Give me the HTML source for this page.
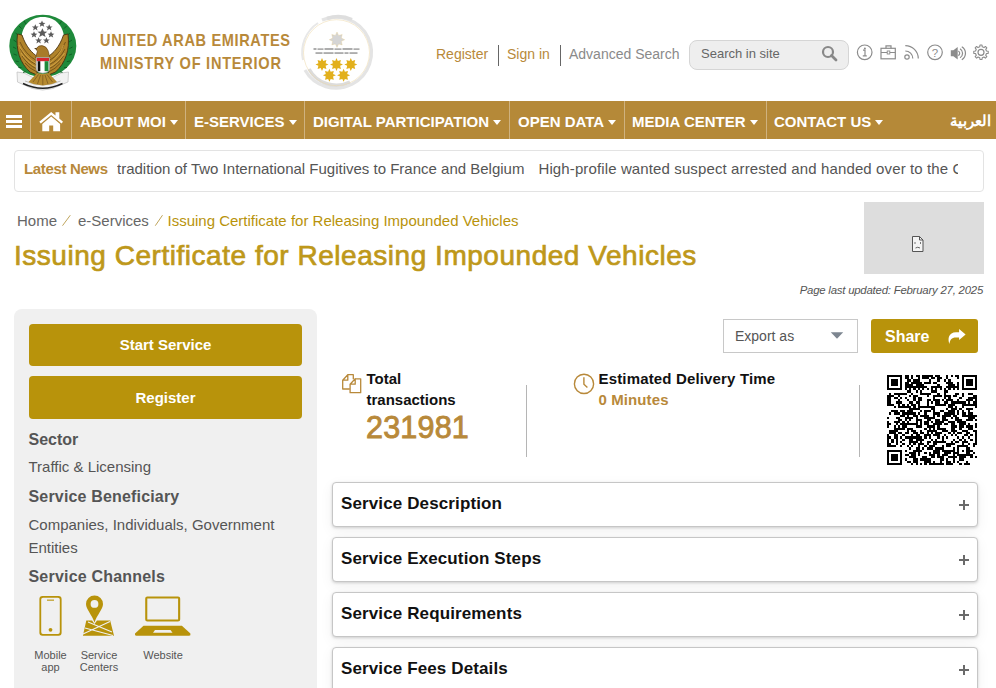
<!DOCTYPE html>
<html><head><meta charset="utf-8">
<style>
*{margin:0;padding:0;box-sizing:border-box}
html,body{width:996px;height:688px;overflow:hidden;background:#fff;font-family:"Liberation Sans",sans-serif}
.a{position:absolute;white-space:nowrap}
#nav{position:absolute;left:0;top:101px;width:996px;height:38px;background:#b58938}
#nav .sep{position:absolute;top:0;width:1px;height:38px;background:#cfb27f}
#nav .it{position:absolute;top:11px;height:20px;line-height:20px;color:#fff;font-weight:bold;font-size:15px}
.caret{display:inline-block;width:0;height:0;border-left:4px solid transparent;border-right:4px solid transparent;border-top:5px solid #fff;vertical-align:middle;margin-left:4px;position:relative;top:-1px}
.btn{position:absolute;left:29px;width:273px;height:42px;background:#b8930b;border-radius:4px;color:#fff;font-weight:bold;font-size:15px;text-align:center;line-height:42px}
.acc{position:absolute;left:332px;width:646px;height:45px;border:1px solid #c6c6c6;border-radius:4px;background:#fff;box-shadow:0 1px 3px rgba(0,0,0,0.16),0 4px 14px rgba(0,0,0,0.06)}
.acc .t{position:absolute;left:8px;top:0;line-height:42px;font-weight:bold;font-size:17px;letter-spacing:0.12px;color:#111}
.acc .p{position:absolute;left:626px;top:17px;width:10px;height:10px}
.acc .p:before{content:"";position:absolute;left:4px;top:0;width:2px;height:10px;background:#6a6a6a}
.acc .p:after{content:"";position:absolute;left:0;top:4px;width:10px;height:2px;background:#6a6a6a}
.lbl{position:absolute;font-size:11px;line-height:12px;color:#555;text-align:center;white-space:nowrap}
</style></head><body>

<!-- MOI emblem -->
<svg class="a" style="left:0;top:0" width="90" height="100" viewBox="0 0 90 100">
  <!-- ribbon -->
  <path d="M17 72 L24 73 Q42.8 86 61.5 73 L68.5 72 L68 82 L63 84 Q42.8 96 22 84 L17.5 82Z" fill="#f2f2f2" stroke="#bdbdbd" stroke-width="0.7"/>
  <path d="M23 83.5 Q42.8 93 62.5 83.5" fill="none" stroke="#222" stroke-width="1.4"/>
  <path d="M25 81 Q42.8 89 60.5 81" fill="none" stroke="#999" stroke-width="0.6"/>
  <ellipse cx="42.8" cy="46" rx="33.5" ry="31.2" fill="#1f8a3b"/>
  <g fill="none" stroke="#0f5c22" stroke-width="0.9">
    <path d="M13.5 40 l3 2 M13 47 l3.2 1.6 M13.6 54 l3.2 1.2 M15.5 61 l3.2 0.6 M18.5 67.5 l3 0 M23 72.5 l2.6 -0.8 M15.5 33 l3 2.3 M19 26 l2.6 2.6 M24 21 l2 3"/>
    <path d="M72 40 l-3 2 M72.6 47 l-3.2 1.6 M72 54 l-3.2 1.2 M70 61 l-3.2 0.6 M67 67.5 l-3 0 M62.5 72.5 l-2.6 -0.8 M70 33 l-3 2.3 M66.6 26 l-2.6 2.6 M61.6 21 l-2 3"/>
  </g>
  <path d="M42.8 17 C56 17 64.5 27 64 40 C63.5 52 56 62 42.8 62 C29.6 62 22 52 21.5 40 C21 27 29.6 17 42.8 17Z" fill="#fff"/>
  <g fill="#5a5a5a">
    <path d="M42 20.5l1 2.3 2.4.1-1.9 1.5.7 2.3-2.2-1.3-2.2 1.3.7-2.3-1.9-1.5 2.4-.1z"/>
    <path d="M35.3 24.2l1 2.3 2.4.1-1.9 1.5.7 2.3-2.2-1.3-2.2 1.3.7-2.3-1.9-1.5 2.4-.1z"/>
    <path d="M49.2 24.2l1 2.3 2.4.1-1.9 1.5.7 2.3-2.2-1.3-2.2 1.3.7-2.3-1.9-1.5 2.4-.1z"/>
    <path d="M34 31.3l1 2.3 2.4.1-1.9 1.5.7 2.3-2.2-1.3-2.2 1.3.7-2.3-1.9-1.5 2.4-.1z"/>
    <path d="M51 31.3l1 2.3 2.4.1-1.9 1.5.7 2.3-2.2-1.3-2.2 1.3.7-2.3-1.9-1.5 2.4-.1z"/>
    <path d="M38.6 37.2l1 2.3 2.4.1-1.9 1.5.7 2.3-2.2-1.3-2.2 1.3.7-2.3-1.9-1.5 2.4-.1z"/>
    <path d="M46.4 37.2l1 2.3 2.4.1-1.9 1.5.7 2.3-2.2-1.3-2.2 1.3.7-2.3-1.9-1.5 2.4-.1z"/>
    <path d="M42.4 28.3l1.5 3.2 3.4.2-2.7 2.1 1 3.3-3.2-1.9-3.2 1.9 1-3.3-2.7-2.1 3.4-.2z"/>
  </g>
  <!-- wings -->
  <path d="M17.5 34 C15.5 50 20 63 30 72 L37 75 L38 57 C32 53 26 47 22 35Z" fill="#b0832a" stroke="#4a3210" stroke-width="0.9"/>
  <path d="M68 34 C70 50 65.5 63 55.5 72 L48.5 75 L47.5 57 C53.5 53 59.5 47 63.5 35Z" fill="#b0832a" stroke="#4a3210" stroke-width="0.9"/>
  <g stroke="#5e4112" stroke-width="0.7" fill="none">
    <path d="M20 42 Q25 54 37 61 M20.5 49 Q26 60 37 65 M22 56 Q28 65 37 69 M25 63 Q30 69 37 72"/>
    <path d="M65.5 42 Q60.5 54 48.5 61 M65 49 Q59.5 60 48.5 65 M63.5 56 Q57.5 65 48.5 69 M60.5 63 Q55.5 69 48.5 72"/>
  </g>
  <g stroke="#e0b050" stroke-width="0.7" fill="none">
    <path d="M19 45 Q25 57 36 63.5 M21 53 Q27 62.5 36 67 M63.5 45 Q60 55 49.5 63.5 M64.5 53 Q58.5 62.5 49.5 67"/>
  </g>
  <!-- tail -->
  <path d="M28.5 82 L37 73 L42.8 74 L48.5 73 L57 82 L52 84 L42.8 85.5 L33.5 84Z" fill="#b58a30"/>
  <g stroke="#6b4a17" stroke-width="0.6"><path d="M33 82 L38.5 74.5 M37.5 84 L40.5 75 M42.8 85 V75 M48 84 L45 75 M52.5 82 L47 74.5"/></g>
  <!-- body/head -->
  <path d="M36.5 48.5 Q38 45.3 42 45.6 Q46.5 46.3 48 50.5 L50 58 L35.5 58 L37.5 51 Q35.5 50.3 36.5 48.5Z" fill="#a87b2a" stroke="#5a3d10" stroke-width="0.6"/>
  <path d="M36.5 47.8 L34 48.6 L36.8 49.8Z" fill="#4a3210"/>
  <!-- shield -->
  <path d="M36.2 57.6 H49.5 V69 Q49.5 72.5 42.8 73.2 Q36.2 72.5 36.2 69Z" fill="#fff" stroke="#9a9a9a" stroke-width="0.7"/>
  <rect x="36.7" y="58" width="12.3" height="3.2" fill="#d7262f"/>
  <rect x="37.7" y="61.2" width="2.6" height="10" fill="#111"/>
  <rect x="44.6" y="61.2" width="3.9" height="10" fill="#1f8a3b"/>
</svg>

<svg class="a" style="left:95px;top:25px" width="205" height="50" viewBox="95 25 205 50">
  <g transform="translate(100 0) scale(0.9 1)"><text x="0" y="46.2" font-family="Liberation Sans" font-weight="bold" font-size="16.2" fill="#b8893a" textLength="211.1" lengthAdjust="spacing">UNITED ARAB EMIRATES</text>
  <text x="0" y="69.4" font-family="Liberation Sans" font-weight="bold" font-size="16.2" fill="#b8893a" textLength="201.1" lengthAdjust="spacing">MINISTRY OF INTERIOR</text></g>
</svg>

<!-- star rating logo -->
<svg class="a" style="left:295px;top:10px" width="85" height="85" viewBox="295 10 85 85">
  <path d="M322 20 A35.5 35.5 0 1 1 305 70" fill="none" stroke="#e4e4e4" stroke-width="3.2"/>
  <path d="M309 69 A31 31 0 0 0 350 82" fill="none" stroke="#dcdcdc" stroke-width="3.5"/>
  <path d="M303 60 A35 35 0 0 1 318 23" fill="none" stroke="#e8e8e8" stroke-width="2"/>
  <path d="M327 18.5 A35 35 0 0 1 352 19.5" fill="none" stroke="#dedede" stroke-width="3.5"/>
  <circle cx="336.5" cy="52.7" r="33" fill="none" stroke="#edd7a4" stroke-width="0.5"/>
  <path d="M337 32 l1.6 3.4 3.6-.9-.9 3.6 3.4 1.6-3.4 1.6.9 3.6-3.6-.9-1.6 3.4-1.6-3.4-3.6.9.9-3.6-3.4-1.6 3.4-1.6-.9-3.6 3.6.9z" fill="#d5d5d5" stroke="#e5c47a" stroke-width="0.3"/>
  <g fill="#8a8a8a"><rect x="313.5" y="48.3" width="3" height="1.4"/><rect x="317.5" y="48.5" width="6" height="1.2"/><rect x="324.5" y="48.3" width="9" height="1.4"/><rect x="334.5" y="48.5" width="7" height="1.2"/><rect x="342.5" y="48.3" width="10" height="1.4"/><rect x="353.5" y="48.5" width="6" height="1.2"/></g>
  <g fill="#9a9a9a"><rect x="315.5" y="52.3" width="7" height="1.5"/><rect x="323.5" y="52.3" width="10" height="1.5"/><rect x="334.5" y="52.3" width="9" height="1.5"/><rect x="344.5" y="52.3" width="4" height="1.5"/><rect x="349.5" y="52.3" width="8" height="1.5"/></g>
  <g fill="#e2b01c">
    <path id="st" d="M322 58 l1.3 2.9 3.1-.8-.8 3.1 2.9 1.3-2.9 1.3.8 3.1-3.1-.8-1.3 2.9-1.3-2.9-3.1.8.8-3.1-2.9-1.3 2.9-1.3-.8-3.1 3.1.8z"/>
    <use href="#st" x="14.5"/><use href="#st" x="28.8"/>
    <use href="#st" x="7.4" y="10.8"/><use href="#st" x="21.6" y="10.8"/>
  </g>
</svg>

<!-- top links -->
<div class="a" style="left:436px;top:45px;font-size:14px;line-height:18px;color:#b8893a">Register</div>
<div class="a" style="left:498px;top:45px;width:1px;height:21px;background:#666"></div>
<div class="a" style="left:507px;top:45px;font-size:14px;line-height:18px;color:#b8893a">Sign in</div>
<div class="a" style="left:560px;top:45px;width:1px;height:21px;background:#666"></div>
<div class="a" style="left:569px;top:45px;font-size:14px;line-height:18px;color:#8a8a8a">Advanced Search</div>
<div class="a" style="left:689px;top:40px;width:160px;height:30px;background:#eeeeee;border:1px solid #d5d5d5;border-radius:8px"></div>
<div class="a" style="left:701px;top:45px;font-size:13px;line-height:18px;color:#666">Search in site</div>
<svg class="a" style="left:820px;top:44px" width="20" height="20" viewBox="0 0 20 20"><circle cx="8" cy="8" r="5" fill="none" stroke="#888" stroke-width="2.2"/><path d="M11.5 11.5 L16 16" stroke="#888" stroke-width="2.8" stroke-linecap="round"/></svg>
<!-- header icons -->
<svg class="a" style="left:850px;top:38px" width="146" height="30" viewBox="850 38 146 30">
  <g fill="none" stroke="#8c8c8c" stroke-width="1.2">
    <circle cx="864.7" cy="52.3" r="7.3"/>
    <path d="M863 50.2h2v5.5 M862.8 55.8h4" />
    <rect x="881" y="48.3" width="14.3" height="10.5"/>
    <path d="M886 48.3v-2.5h5v2.5 M881 52.5h14.3"/>
    <path d="M905.3 51 a7.5 7.5 0 0 1 7.5 7.5 M905.3 45.6 a13 13 0 0 1 13 13"/>
    <circle cx="935" cy="52.3" r="7.3"/>
    <path d="M958.3 51 a2.6 2.6 0 0 1 0 4.6 M960 48.8 a5.2 5.2 0 0 1 0 9 M961.8 46.8 a7.6 7.6 0 0 1 0 13"/>
    <circle cx="981" cy="52.3" r="3"/>
  </g>
  <rect x="887.2" y="51" width="2.6" height="3" fill="#fff" stroke="#8c8c8c" stroke-width="0.9"/>
  <circle cx="864.9" cy="48.6" r="1" fill="#8c8c8c"/>
  <circle cx="907" cy="57" r="2.2" fill="none" stroke="#8c8c8c" stroke-width="1.2"/>
  <text x="935" y="56.8" font-family="Liberation Sans" font-size="11.5" fill="#8c8c8c" text-anchor="middle">?</text>
  <path d="M950.8 50.3h2.6l4.3-3.2v12.4l-4.3-3.2h-2.6z" fill="#8c8c8c"/>
  <path d="M979.77 46.84 L979.97 45.07 L982.03 45.07 L982.23 46.84 L984.00 47.57 L985.38 46.46 L986.84 47.92 L985.73 49.30 L986.46 51.07 L988.23 51.27 L988.23 53.33 L986.46 53.53 L985.73 55.30 L986.84 56.68 L985.38 58.14 L984.00 57.03 L982.23 57.76 L982.03 59.53 L979.97 59.53 L979.77 57.76 L978.00 57.03 L976.62 58.14 L975.16 56.68 L976.27 55.30 L975.54 53.53 L973.77 53.33 L973.77 51.27 L975.54 51.07 L976.27 49.30 L975.16 47.92 L976.62 46.46 L978.00 47.57Z" fill="none" stroke="#8c8c8c" stroke-width="1.1" stroke-linejoin="round"/>
</svg>

<!-- nav -->
<div id="nav">
  <div class="sep" style="left:30px"></div>
  <div class="sep" style="left:71px"></div>
  <div class="sep" style="left:185px"></div>
  <div class="sep" style="left:304px"></div>
  <div class="sep" style="left:509px"></div>
  <div class="sep" style="left:624px"></div>
  <div class="sep" style="left:766px"></div>
  <svg class="a" style="left:0;top:0" width="80" height="38" viewBox="0 101 80 38">
    <rect x="6" y="115" width="16" height="3" fill="#fff"/>
    <rect x="6" y="120" width="16" height="3" fill="#fff"/>
    <rect x="6" y="125" width="16" height="3" fill="#fff"/>
    <path d="M39.3 121.8 L51.2 112 L55.5 115.5 V112.3 H59.3 V118.6 L63 121.8 L61.5 123.6 L51.2 115.1 L40.8 123.6Z" fill="#fff"/>
    <path d="M42.3 131.3 V124 L51.2 116.6 L60.1 124 V131.3 H53.2 V125.6 H49.2 V131.3Z" fill="#fff"/>
  </svg>
  <div class="it" style="left:80px">ABOUT MOI<span class="caret"></span></div>
  <div class="it" style="left:194px">E-SERVICES<span class="caret"></span></div>
  <div class="it" style="left:313px">DIGITAL PARTICIPATION<span class="caret"></span></div>
  <div class="it" style="left:518px">OPEN DATA<span class="caret"></span></div>
  <div class="it" style="left:632px">MEDIA CENTER<span class="caret"></span></div>
  <div class="it" style="left:774px">CONTACT US<span class="caret"></span></div>
  <div class="it" style="left:950px;top:9.5px;font-size:15px;font-weight:bold" dir="rtl">العربية</div>
</div>

<!-- news -->
<div class="a" style="left:14px;top:150px;width:970px;height:42px;border:1px solid #e3e3e3;border-radius:4px;background:#fff"></div>
<div class="a" style="left:24px;top:159px;font-size:15px;line-height:20px;font-weight:bold;letter-spacing:-0.35px;color:#b8893a">Latest News</div>
<div class="a" style="left:117px;top:159px;width:841px;overflow:hidden;font-size:15px;line-height:20px;color:#555"><span style="margin-left:0px">tradition of Two International Fugitives to France and Belgium</span><span style="margin-left:14px;letter-spacing:0.12px">High-profile wanted suspect arrested and handed over to the Central</span></div>

<!-- breadcrumb -->
<div class="a" style="left:17px;top:212px;font-size:15px;line-height:18px;color:#666">Home</div>
<svg class="a" style="left:60px;top:213px" width="12" height="15" viewBox="60 213 12 15"><path d="M62.5 225.7 L70.3 215.2" stroke="#bfa55c" stroke-width="1"/></svg>
<div class="a" style="left:78px;top:212px;font-size:15px;line-height:18px;color:#666">e-Services</div>
<svg class="a" style="left:153px;top:213px" width="12" height="15" viewBox="153 213 12 15"><path d="M155.3 225.7 L162.5 215.2" stroke="#bfa55c" stroke-width="1"/></svg>
<div class="a" style="left:167.5px;top:212px;font-size:15px;line-height:18px;color:#b8930b">Issuing Certificate for Releasing Impounded Vehicles</div>
<div class="a" style="left:14px;top:240px;font-size:28px;line-height:32px;color:#be981a;letter-spacing:0.53px;-webkit-text-stroke:0.7px #be981a">Issuing Certificate for Releasing Impounded Vehicles</div>
<div class="a" style="left:864px;top:202px;width:120px;height:72px;background:#dddddd"></div>
<svg class="a" style="left:910px;top:235px" width="16" height="18" viewBox="0 0 16 18"><path d="M2.5 1.5 H9.5 L13 5 V16.5 H2.5Z" fill="#f4f4f4" stroke="#555" stroke-width="1"/><path d="M9.5 1.5 V5 H13" fill="none" stroke="#555" stroke-width="1"/><path d="M5.5 13 Q7.7 11.5 10 13" fill="none" stroke="#555" stroke-width="0.9"/><path d="M5 7v2 M10.5 7v2" stroke="#555" stroke-width="0.8"/></svg>
<div class="a" style="left:790px;top:283px;width:193px;text-align:right;font-size:11.4px;line-height:14px;font-style:italic;letter-spacing:-0.22px;color:#555">Page last updated: February 27, 2025</div>

<!-- sidebar -->
<div class="a" style="left:14px;top:309px;width:303px;height:400px;background:#f0f0f0;border-radius:8px"></div>
<div class="btn" style="top:324px">Start Service</div>
<div class="btn" style="top:376px;height:43px;line-height:43px">Register</div>
<div class="a" style="left:28.5px;top:430px;font-size:16px;line-height:20px;font-weight:bold;color:#555">Sector</div>
<div class="a" style="left:28.5px;top:458px;font-size:15px;line-height:18px;color:#555">Traffic &amp; Licensing</div>
<div class="a" style="left:28.5px;top:487px;font-size:16px;line-height:20px;font-weight:bold;letter-spacing:0.17px;color:#555">Service Beneficiary</div>
<div class="a" style="left:28.5px;top:513px;font-size:15px;line-height:23px;color:#555;white-space:normal;width:270px">Companies, Individuals, Government Entities</div>
<div class="a" style="left:28.5px;top:567px;font-size:16px;line-height:20px;font-weight:bold;letter-spacing:0.2px;color:#555">Service Channels</div>
<svg class="a" style="left:30px;top:590px" width="170" height="50" viewBox="30 590 170 50">
  <g fill="#b8930b">
    <path fill-rule="evenodd" d="M42.5 596 H58.5 Q61.6 596 61.6 599 V632.7 Q61.6 635.7 58.5 635.7 H42.5 Q39.4 635.7 39.4 632.7 V599 Q39.4 596 42.5 596Z M43 597.8 Q41.2 597.8 41.2 599.6 V632 Q41.2 633.9 43 633.9 H58 Q59.8 633.9 59.8 632 V599.6 Q59.8 597.8 58 597.8Z"/>
    <rect x="47" y="599.6" width="7" height="1.1"/>
    <circle cx="50.5" cy="629.8" r="1.9"/>
    <path fill-rule="evenodd" d="M94.5 595.5 A8.5 8.5 0 0 1 103 604 C103 609 97 615 94.5 622.4 C92 615 86 609 86 604 A8.5 8.5 0 0 1 94.5 595.5Z M94.5 600 A3.9 3.9 0 1 0 94.5 607.8 A3.9 3.9 0 1 0 94.5 600Z"/>
    <path d="M86.3 620.4 H92 L94.5 624 L97 620.4 H110.2 L114 635.7 H82.9Z"/>
    <path d="M147.3 596.5 H178 Q180.2 596.5 180.2 598.5 V619.6 Q180.2 621.6 178 621.6 H147.3 Q145.2 621.6 145.2 619.6 V598.5 Q145.2 596.5 147.3 596.5Z M147.3 598.6 V619.5 H178.1 V598.6Z" fill-rule="evenodd"/>
    <path d="M143.5 625.8 H181.9 L190.4 633.5 Q191 635.7 189 635.7 H136.4 Q134.4 635.7 135 633.5Z"/>
  </g>
  <g stroke="#f0f0f0" stroke-width="1.1" fill="none">
    <path d="M83 634 L110 621.5 M85 628 L113 635.5 M88 622 L112 632"/>
  </g>
  <path d="M153 632.7 L155 630 H170.5 L172.5 632.7Z" fill="#f0f0f0"/>
</svg>
<div class="lbl" style="left:30px;top:649px;width:41px">Mobile<br>app</div>
<div class="lbl" style="left:79px;top:649px;width:40px">Service<br>Centers</div>
<div class="lbl" style="left:133px;top:649px;width:60px">Website</div>

<!-- actions -->
<div class="a" style="left:723px;top:319px;width:135px;height:34px;border:1px solid #c8c8c8;background:#fff"></div>
<div class="a" style="left:735px;top:327px;font-size:14px;line-height:18px;color:#555">Export as</div>
<svg class="a" style="left:830px;top:331px" width="14" height="9" viewBox="0 0 14 9"><path d="M0.8 1.3 H13.2 L7 7.8Z" fill="#7d8690"/></svg>
<div class="a" style="left:871px;top:319px;width:107px;height:34px;background:#b8930b;border-radius:3px"></div>
<div class="a" style="left:885px;top:327px;font-size:16px;line-height:20px;font-weight:bold;color:#fff">Share</div>
<svg class="a" style="left:945px;top:326px" width="24" height="20" viewBox="945 326 24 20"><path d="M949.4 344 C947.5 339 948.5 332.5 956 332.3 H959.1 V328.9 L965.6 334.4 L959.1 339.9 V337.4 H956 C951.5 337.4 949.8 340 949.4 344Z" fill="#fff"/></svg>

<!-- stats -->
<svg class="a" style="left:336px;top:368px" width="30" height="30" viewBox="336 368 30 30" fill="none" stroke="#b8893a" stroke-width="1.3" stroke-linejoin="round">
  <path d="M347.8 374.7 H353.3 V379.2 M349.8 389 H342.7 V380.2 L347.8 374.7 V380.2 H342.7"/>
  <path d="M355.2 378.8 H360.7 V392.7 H350.1 V384.2 L355.2 378.8 V384.2 H350.1"/>
</svg>
<div class="a" style="left:366.5px;top:368px;font-size:15px;line-height:21px;font-weight:bold;color:#111;white-space:normal;width:100px">Total transactions</div>
<div class="a" style="left:366px;top:410px;font-size:30.5px;line-height:34px;letter-spacing:0.2px;color:#b8893a;-webkit-text-stroke:0.9px #b8893a">231981</div>
<div class="a" style="left:526px;top:385px;width:1px;height:72px;background:#b5b5b5"></div>
<svg class="a" style="left:570px;top:370px" width="28" height="28" viewBox="570 370 28 28" fill="none" stroke="#b8893a" stroke-width="1.4"><circle cx="584" cy="383.9" r="9.6"/><path d="M583.9 377.3 V384.2 L587.4 387.5"/></svg>
<div class="a" style="left:598.5px;top:368px;font-size:15px;line-height:21px;font-weight:bold;letter-spacing:0.16px;color:#111">Estimated Delivery Time</div>
<div class="a" style="left:598.5px;top:389px;font-size:15px;line-height:21px;font-weight:bold;letter-spacing:0.1px;color:#b8893a">0 Minutes</div>
<div class="a" style="left:859px;top:385px;width:1px;height:72px;background:#b5b5b5"></div>
<svg class="a" style="left:887px;top:375px" width="90" height="90" viewBox="0 0 41 41" shape-rendering="crispEdges"><path d="M0 0h7v1h-7zM8 0h2v1h-2zM11 0h1v1h-1zM13 0h2v1h-2zM16 0h5v1h-5zM22 0h2v1h-2zM27 0h1v1h-1zM29 0h1v1h-1zM31 0h2v1h-2zM34 0h7v1h-7zM0 1h1v1h-1zM6 1h1v1h-1zM8 1h2v1h-2zM11 1h1v1h-1zM14 1h1v1h-1zM16 1h3v1h-3zM20 1h2v1h-2zM23 1h2v1h-2zM27 1h1v1h-1zM32 1h1v1h-1zM34 1h1v1h-1zM40 1h1v1h-1zM0 2h1v1h-1zM2 2h3v1h-3zM6 2h1v1h-1zM9 2h2v1h-2zM12 2h3v1h-3zM19 2h1v1h-1zM23 2h1v1h-1zM26 2h1v1h-1zM28 2h1v1h-1zM34 2h1v1h-1zM36 2h3v1h-3zM40 2h1v1h-1zM0 3h1v1h-1zM2 3h3v1h-3zM6 3h1v1h-1zM8 3h2v1h-2zM11 3h5v1h-5zM17 3h3v1h-3zM21 3h2v1h-2zM27 3h3v1h-3zM32 3h1v1h-1zM34 3h1v1h-1zM36 3h3v1h-3zM40 3h1v1h-1zM0 4h1v1h-1zM2 4h3v1h-3zM6 4h1v1h-1zM8 4h4v1h-4zM13 4h4v1h-4zM23 4h1v1h-1zM28 4h3v1h-3zM32 4h1v1h-1zM34 4h1v1h-1zM36 4h3v1h-3zM40 4h1v1h-1zM0 5h1v1h-1zM6 5h1v1h-1zM8 5h10v1h-10zM20 5h5v1h-5zM27 5h6v1h-6zM34 5h1v1h-1zM40 5h1v1h-1zM0 6h7v1h-7zM8 6h1v1h-1zM10 6h1v1h-1zM12 6h1v1h-1zM14 6h1v1h-1zM16 6h1v1h-1zM18 6h1v1h-1zM20 6h1v1h-1zM22 6h1v1h-1zM24 6h1v1h-1zM26 6h1v1h-1zM28 6h1v1h-1zM30 6h1v1h-1zM32 6h1v1h-1zM34 6h7v1h-7zM9 7h2v1h-2zM13 7h1v1h-1zM15 7h1v1h-1zM20 7h3v1h-3zM26 7h2v1h-2zM1 8h1v1h-1zM3 8h6v1h-6zM11 8h1v1h-1zM15 8h5v1h-5zM23 8h1v1h-1zM26 8h1v1h-1zM31 8h2v1h-2zM34 8h1v1h-1zM37 8h2v1h-2zM0 9h3v1h-3zM5 9h1v1h-1zM10 9h1v1h-1zM12 9h2v1h-2zM18 9h1v1h-1zM21 9h4v1h-4zM26 9h3v1h-3zM30 9h2v1h-2zM34 9h1v1h-1zM39 9h2v1h-2zM0 10h2v1h-2zM3 10h2v1h-2zM6 10h1v1h-1zM8 10h1v1h-1zM12 10h1v1h-1zM14 10h2v1h-2zM21 10h1v1h-1zM26 10h1v1h-1zM28 10h1v1h-1zM33 10h1v1h-1zM37 10h4v1h-4zM0 11h2v1h-2zM5 11h1v1h-1zM9 11h1v1h-1zM12 11h1v1h-1zM14 11h2v1h-2zM18 11h2v1h-2zM21 11h3v1h-3zM25 11h1v1h-1zM27 11h3v1h-3zM32 11h1v1h-1zM36 11h3v1h-3zM40 11h1v1h-1zM0 12h2v1h-2zM4 12h3v1h-3zM10 12h2v1h-2zM13 12h2v1h-2zM18 12h1v1h-1zM20 12h1v1h-1zM22 12h2v1h-2zM26 12h2v1h-2zM29 12h7v1h-7zM37 12h1v1h-1zM39 12h2v1h-2zM0 13h3v1h-3zM5 13h1v1h-1zM7 13h1v1h-1zM9 13h1v1h-1zM11 13h2v1h-2zM14 13h1v1h-1zM18 13h1v1h-1zM22 13h5v1h-5zM28 13h3v1h-3zM34 13h7v1h-7zM3 14h1v1h-1zM5 14h6v1h-6zM12 14h1v1h-1zM14 14h8v1h-8zM28 14h2v1h-2zM31 14h1v1h-1zM34 14h1v1h-1zM40 14h1v1h-1zM10 15h5v1h-5zM20 15h2v1h-2zM27 15h1v1h-1zM29 15h3v1h-3zM33 15h1v1h-1zM36 15h3v1h-3zM2 16h3v1h-3zM6 16h2v1h-2zM9 16h3v1h-3zM15 16h1v1h-1zM17 16h3v1h-3zM21 16h1v1h-1zM24 16h2v1h-2zM28 16h3v1h-3zM32 16h1v1h-1zM34 16h1v1h-1zM37 16h1v1h-1zM1 17h1v1h-1zM3 17h3v1h-3zM7 17h6v1h-6zM14 17h1v1h-1zM17 17h1v1h-1zM21 17h3v1h-3zM26 17h5v1h-5zM32 17h1v1h-1zM34 17h2v1h-2zM37 17h2v1h-2zM6 18h2v1h-2zM9 18h1v1h-1zM12 18h2v1h-2zM15 18h4v1h-4zM21 18h1v1h-1zM23 18h1v1h-1zM25 18h4v1h-4zM30 18h2v1h-2zM34 18h7v1h-7zM0 19h1v1h-1zM4 19h2v1h-2zM8 19h4v1h-4zM13 19h1v1h-1zM17 19h5v1h-5zM25 19h2v1h-2zM29 19h1v1h-1zM31 19h2v1h-2zM37 19h3v1h-3zM5 20h2v1h-2zM8 20h1v1h-1zM10 20h1v1h-1zM13 20h3v1h-3zM18 20h2v1h-2zM22 20h2v1h-2zM25 20h3v1h-3zM31 20h3v1h-3zM36 20h3v1h-3zM40 20h1v1h-1zM0 21h1v1h-1zM3 21h3v1h-3zM7 21h1v1h-1zM9 21h1v1h-1zM13 21h1v1h-1zM15 21h1v1h-1zM17 21h2v1h-2zM20 21h1v1h-1zM22 21h4v1h-4zM28 21h3v1h-3zM32 21h4v1h-4zM0 22h2v1h-2zM4 22h1v1h-1zM6 22h8v1h-8zM15 22h1v1h-1zM17 22h2v1h-2zM21 22h4v1h-4zM26 22h2v1h-2zM29 22h2v1h-2zM33 22h3v1h-3zM37 22h1v1h-1zM40 22h1v1h-1zM0 23h1v1h-1zM3 23h1v1h-1zM5 23h1v1h-1zM7 23h2v1h-2zM13 23h3v1h-3zM18 23h4v1h-4zM23 23h1v1h-1zM29 23h3v1h-3zM33 23h2v1h-2zM36 23h3v1h-3zM40 23h1v1h-1zM3 24h5v1h-5zM9 24h3v1h-3zM17 24h1v1h-1zM19 24h1v1h-1zM21 24h1v1h-1zM23 24h4v1h-4zM29 24h2v1h-2zM33 24h1v1h-1zM37 24h2v1h-2zM1 25h4v1h-4zM9 25h1v1h-1zM11 25h2v1h-2zM15 25h1v1h-1zM18 25h5v1h-5zM25 25h3v1h-3zM29 25h3v1h-3zM34 25h3v1h-3zM39 25h2v1h-2zM1 26h3v1h-3zM5 26h2v1h-2zM8 26h2v1h-2zM12 26h2v1h-2zM15 26h2v1h-2zM18 26h1v1h-1zM20 26h1v1h-1zM22 26h3v1h-3zM28 26h1v1h-1zM30 26h1v1h-1zM32 26h2v1h-2zM36 26h2v1h-2zM40 26h1v1h-1zM0 27h1v1h-1zM3 27h2v1h-2zM7 27h1v1h-1zM11 27h1v1h-1zM13 27h2v1h-2zM17 27h3v1h-3zM21 27h3v1h-3zM26 27h1v1h-1zM29 27h1v1h-1zM31 27h1v1h-1zM35 27h2v1h-2zM38 27h1v1h-1zM40 27h1v1h-1zM0 28h2v1h-2zM3 28h2v1h-2zM6 28h1v1h-1zM8 28h8v1h-8zM17 28h1v1h-1zM19 28h1v1h-1zM23 28h1v1h-1zM25 28h1v1h-1zM27 28h1v1h-1zM32 28h1v1h-1zM34 28h1v1h-1zM37 28h1v1h-1zM40 28h1v1h-1zM0 29h1v1h-1zM2 29h1v1h-1zM4 29h1v1h-1zM7 29h1v1h-1zM10 29h2v1h-2zM13 29h4v1h-4zM20 29h1v1h-1zM22 29h1v1h-1zM25 29h1v1h-1zM30 29h1v1h-1zM33 29h1v1h-1zM35 29h1v1h-1zM38 29h1v1h-1zM40 29h1v1h-1zM0 30h1v1h-1zM2 30h1v1h-1zM4 30h1v1h-1zM6 30h1v1h-1zM10 30h4v1h-4zM15 30h1v1h-1zM18 30h2v1h-2zM21 30h6v1h-6zM29 30h1v1h-1zM31 30h2v1h-2zM34 30h3v1h-3zM40 30h1v1h-1zM0 31h2v1h-2zM4 31h1v1h-1zM7 31h1v1h-1zM10 31h1v1h-1zM12 31h1v1h-1zM14 31h3v1h-3zM18 31h1v1h-1zM21 31h2v1h-2zM27 31h4v1h-4zM34 31h1v1h-1zM37 31h1v1h-1zM39 31h2v1h-2zM0 32h4v1h-4zM6 32h1v1h-1zM9 32h1v1h-1zM11 32h1v1h-1zM14 32h1v1h-1zM17 32h1v1h-1zM19 32h3v1h-3zM25 32h1v1h-1zM27 32h2v1h-2zM32 32h5v1h-5zM39 32h1v1h-1zM10 33h1v1h-1zM13 33h2v1h-2zM16 33h1v1h-1zM18 33h3v1h-3zM22 33h4v1h-4zM30 33h1v1h-1zM32 33h1v1h-1zM36 33h2v1h-2zM0 34h7v1h-7zM8 34h1v1h-1zM12 34h4v1h-4zM21 34h3v1h-3zM25 34h6v1h-6zM32 34h1v1h-1zM34 34h1v1h-1zM36 34h3v1h-3zM0 35h1v1h-1zM6 35h1v1h-1zM10 35h3v1h-3zM14 35h1v1h-1zM17 35h1v1h-1zM19 35h1v1h-1zM21 35h3v1h-3zM26 35h3v1h-3zM30 35h3v1h-3zM36 35h2v1h-2zM39 35h1v1h-1zM0 36h1v1h-1zM2 36h3v1h-3zM6 36h1v1h-1zM8 36h2v1h-2zM11 36h2v1h-2zM14 36h1v1h-1zM19 36h3v1h-3zM23 36h1v1h-1zM25 36h3v1h-3zM30 36h1v1h-1zM32 36h7v1h-7zM0 37h1v1h-1zM2 37h3v1h-3zM6 37h1v1h-1zM10 37h3v1h-3zM16 37h2v1h-2zM20 37h2v1h-2zM23 37h3v1h-3zM28 37h4v1h-4zM33 37h3v1h-3zM38 37h1v1h-1zM40 37h1v1h-1zM0 38h1v1h-1zM2 38h3v1h-3zM6 38h1v1h-1zM8 38h1v1h-1zM12 38h2v1h-2zM15 38h5v1h-5zM24 38h2v1h-2zM27 38h1v1h-1zM30 38h1v1h-1zM33 38h2v1h-2zM0 39h1v1h-1zM6 39h1v1h-1zM9 39h2v1h-2zM12 39h2v1h-2zM17 39h3v1h-3zM21 39h1v1h-1zM24 39h1v1h-1zM27 39h2v1h-2zM30 39h1v1h-1zM32 39h1v1h-1zM36 39h1v1h-1zM0 40h7v1h-7zM11 40h1v1h-1zM13 40h1v1h-1zM15 40h1v1h-1zM17 40h1v1h-1zM19 40h7v1h-7zM27 40h3v1h-3zM33 40h1v1h-1zM35 40h3v1h-3z" fill="#000"/></svg>

<!-- accordions -->
<div class="acc" style="top:482px"><div class="t">Service Description</div><div class="p"></div></div>
<div class="acc" style="top:537px"><div class="t">Service Execution Steps</div><div class="p"></div></div>
<div class="acc" style="top:592px"><div class="t">Service Requirements</div><div class="p"></div></div>
<div class="acc" style="top:647px"><div class="t">Service Fees Details</div><div class="p"></div></div>

</body></html>
